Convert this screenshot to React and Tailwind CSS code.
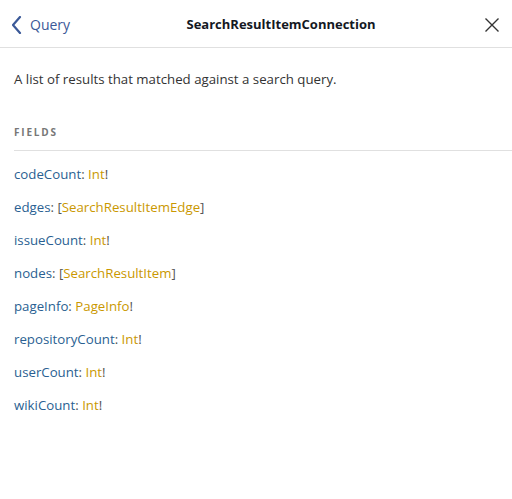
import React from "react";

const fields = [
    { name: "codeCount", type: "Int", list: false, nonNull: true },
    { name: "edges", type: "SearchResultItemEdge", list: true, nonNull: false },
    { name: "issueCount", type: "Int", list: false, nonNull: true },
    { name: "nodes", type: "SearchResultItem", list: true, nonNull: false },
    { name: "pageInfo", type: "PageInfo", list: false, nonNull: true },
    { name: "repositoryCount", type: "Int", list: false, nonNull: true },
    { name: "userCount", type: "Int", list: false, nonNull: true },
    { name: "wikiCount", type: "Int", list: false, nonNull: true },
];

function App() {
    return (
        <div className="w-[512px] h-[499px] bg-white text-[14px] text-[#333] font-['Open_Sans',sans-serif]">
            {/* Title bar */}
            <div className="h-[48px] flex items-center border-b border-[#e0e0e0] pl-[12px] pr-[12px] pt-[3px]">
                <button className="flex items-center gap-[8px] text-[#3B5998]">
                    <svg width="10" height="18" viewBox="0 0 10 18" fill="none">
                        <path d="M8 1L1 9L8 17" stroke="#3B5998" strokeWidth="2.2" strokeLinecap="round" strokeLinejoin="round" />
                    </svg>
                    <span className="text-[14px] leading-[20px]">Query</span>
                </button>
                <div className="flex-1 text-center font-bold text-[13px] text-[#141823] pl-[8px]">
                    SearchResultItemConnection
                </div>
                <button className="w-[16px] h-[16px] flex items-center justify-center">
                    <svg width="16" height="16" viewBox="0 0 16 16" fill="none">
                        <path d="M1.5 1.5L14.5 14.5M14.5 1.5L1.5 14.5" stroke="#333" strokeWidth="1.4" />
                    </svg>
                </button>
            </div>

            {/* Contents */}
            <div className="px-[14px] pt-[21px]">
                <p className="leading-[20px] text-[13.25px]">A list of results that matched against a search query.</p>

                <div className="mt-[25px] mr-[-14px] py-[11px] leading-[14px] text-[10px] font-bold tracking-[1.8px] text-[#777] border-b border-[#e0e0e0]">
                    FIELDS
                </div>

                <div className="pt-[13px] flex flex-col gap-[13px] text-[13.25px] leading-[20px]">
                    {fields.map((f) => (
                        <div key={f.name} className="text-[#555]">
                            <span className="text-[#2A5F92]">{f.name}</span>
                            <span>: </span>
                            {f.list && <span>[</span>}
                            <span className="text-[#CA9800]">{f.type}</span>
                            {f.list && <span>]</span>}
                            {f.nonNull && <span>!</span>}
                        </div>
                    ))}
                </div>
            </div>
        </div>
    );
}

export default App;
